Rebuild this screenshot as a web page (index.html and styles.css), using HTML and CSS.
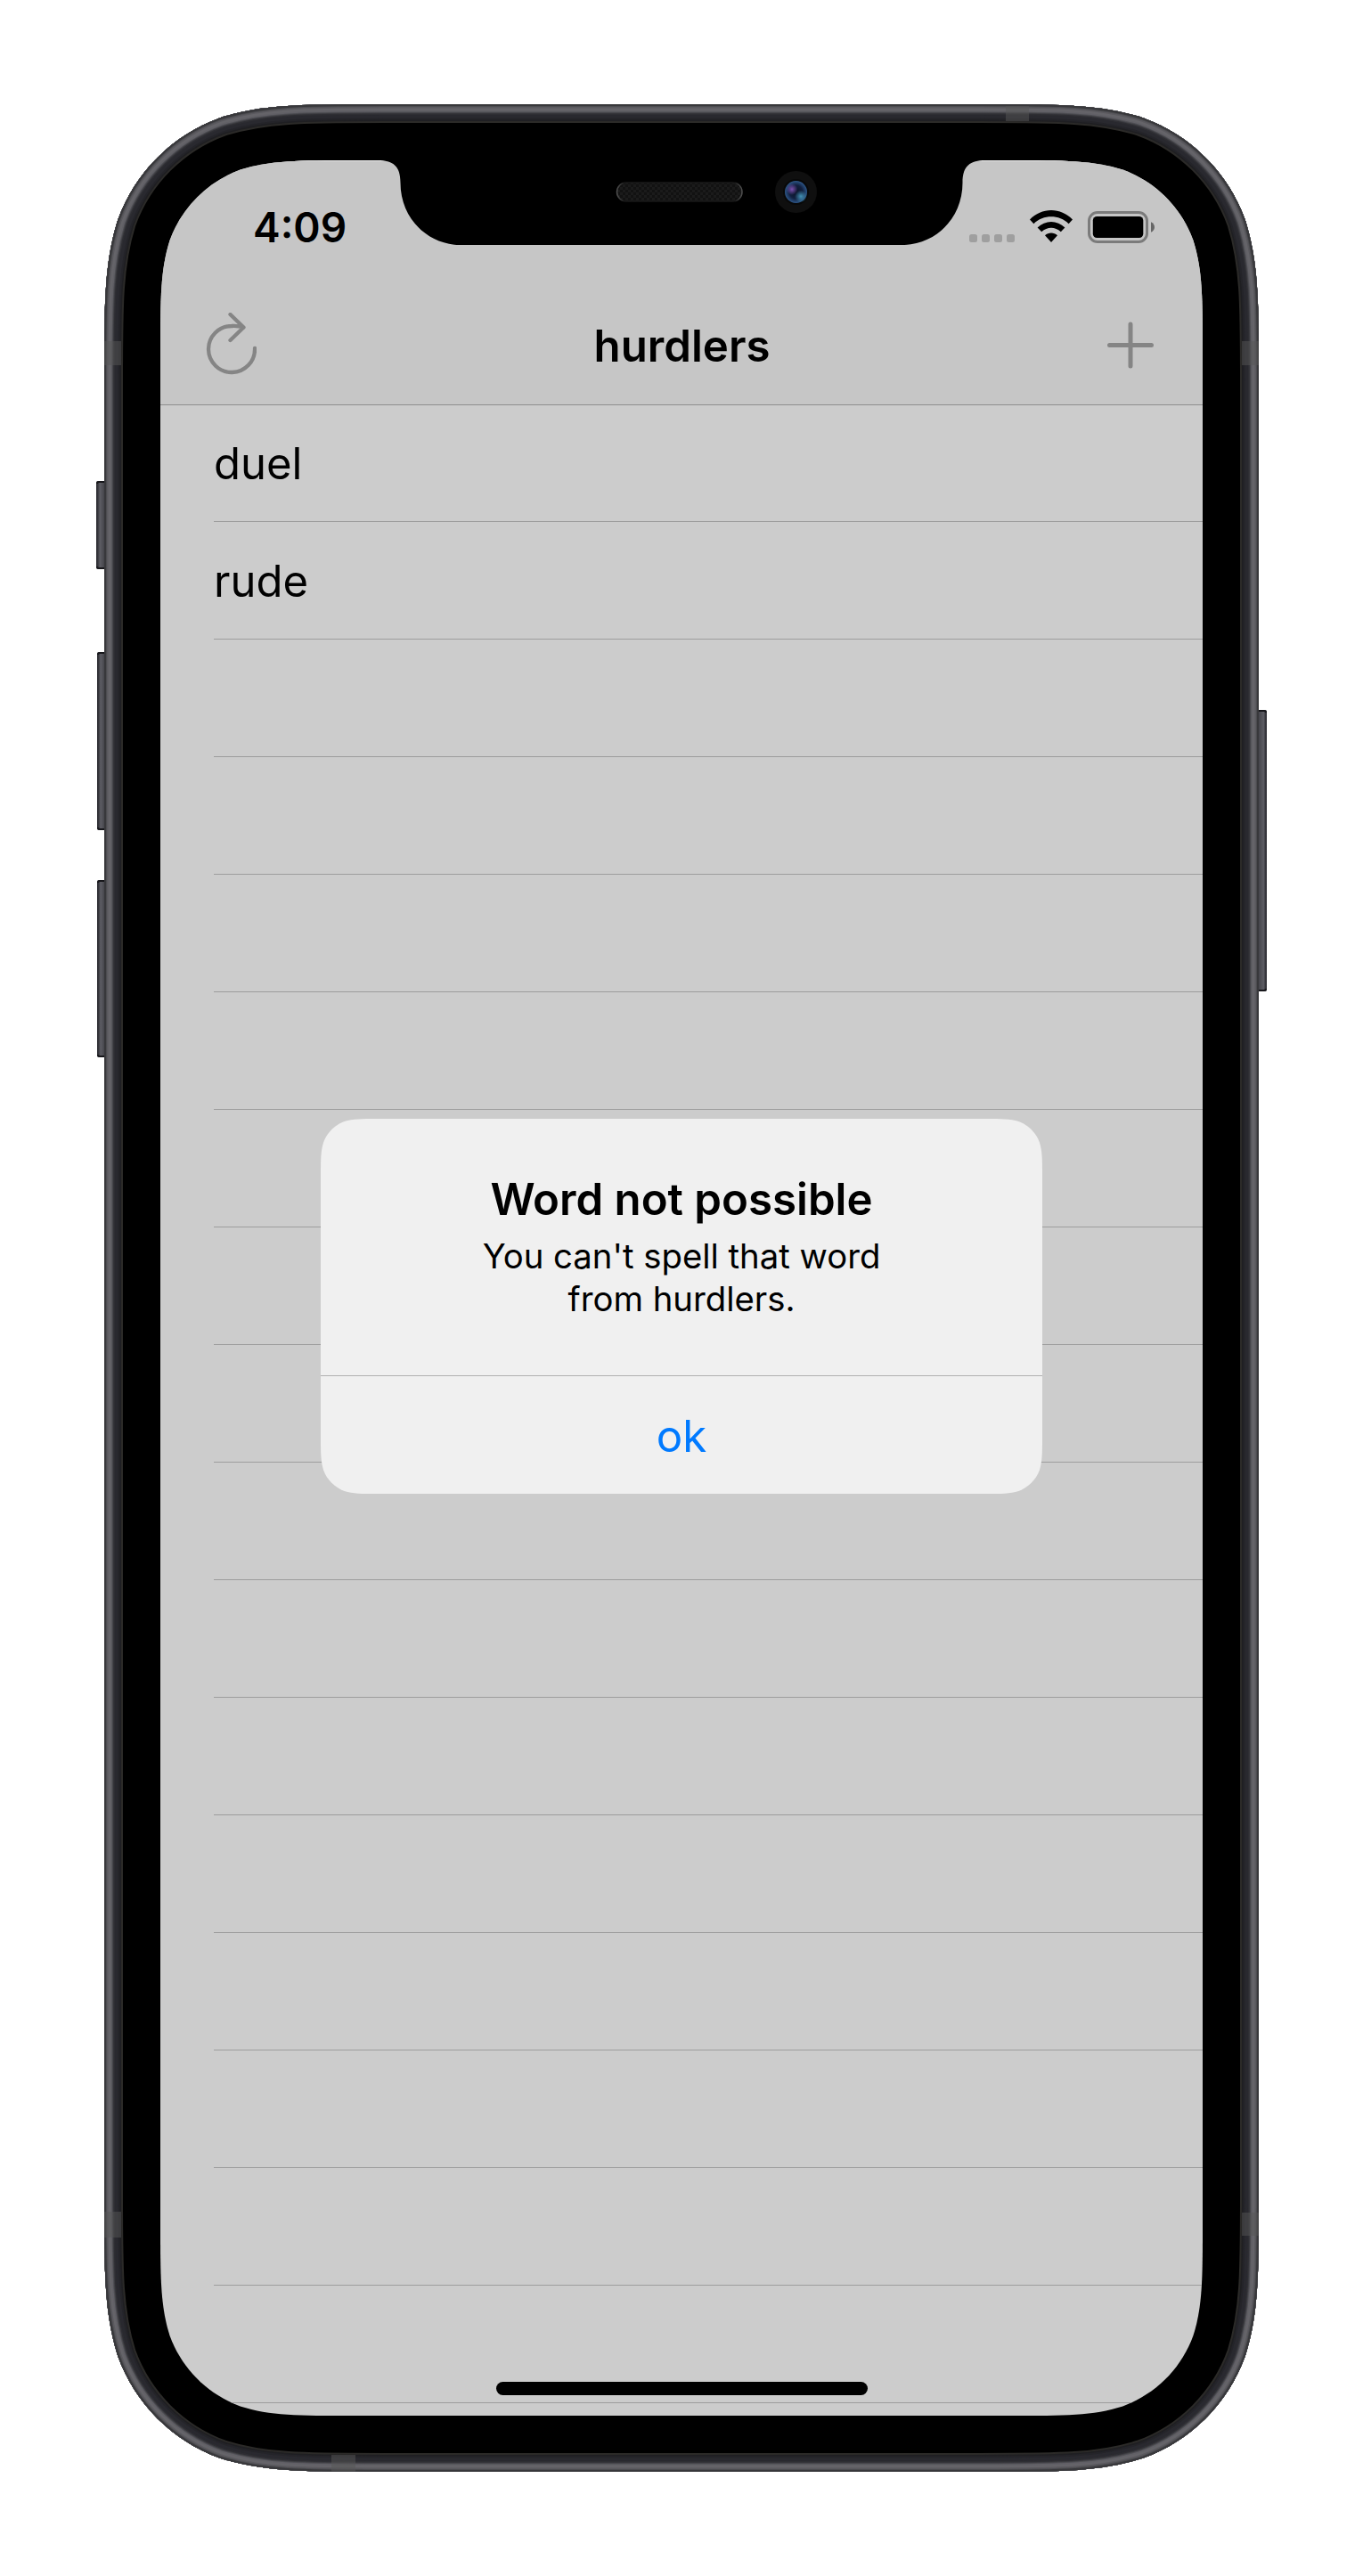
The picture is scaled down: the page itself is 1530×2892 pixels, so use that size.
FILE: index.html
```html
<!DOCTYPE html>
<html lang="en">
<head>
<meta charset="utf-8">
<title>hurdlers</title>
<link rel="stylesheet" href="styles.css">
</head>
<body>
<div class="phone">
  <svg class="shell" width="1314" height="2658" viewBox="-9 0 1314 2658" aria-hidden="true">
    <defs>
      <path id="body" d="M313.4 0H982.6C1072.9 0 1118 0 1166.5 15.4C1219.6 34.7 1261.3 76.4 1280.6 129.5C1296 178 1296 223.1 1296 313.4V2344.6C1296 2434.9 1296 2480 1280.6 2528.5C1261.3 2581.6 1219.6 2623.3 1166.5 2642.6C1118 2658 1072.9 2658 982.6 2658H313.4C223.1 2658 178 2658 129.5 2642.6C76.4 2623.3 34.7 2581.6 15.4 2528.5C0 2480 0 2434.9 0 2344.6V313.4C0 223.1 0 178 15.4 129.5C34.7 76.4 76.4 34.7 129.5 15.4C178 0 223.1 0 313.4 0Z"/>
      <clipPath id="body-clip"><use href="#body"/></clipPath>
      <linearGradient id="key-left"><stop offset="0" stop-color="#29292f"/><stop offset=".15" stop-color="#35353b"/><stop offset=".35" stop-color="#5d5d64"/><stop offset=".65" stop-color="#4b4b51"/><stop offset="1" stop-color="#38383d"/></linearGradient>
      <linearGradient id="key-right"><stop offset="0" stop-color="#38383d"/><stop offset=".35" stop-color="#4b4b51"/><stop offset=".7" stop-color="#5d5d64"/><stop offset=".88" stop-color="#35353b"/><stop offset="1" stop-color="#29292f"/></linearGradient>
    </defs>
    <!-- side buttons -->
    <g fill="url(#key-left)">
      <rect x="-9" y="423" width="12" height="99" rx="2"/>
      <rect x="-8" y="615" width="11" height="200" rx="2"/>
      <rect x="-8" y="871" width="11" height="199" rx="2"/>
    </g>
    <rect x="1293" y="680" width="12" height="316" rx="2" fill="url(#key-right)"/>
    <g fill="none" stroke="#17171b" stroke-width="2">
      <path d="M0 424H-6Q-8 424-8 426M0 521H-6Q-8 521-8 519M0 616H-5Q-7 616-7 618M0 814H-5Q-7 814-7 812M0 872H-5Q-7 872-7 874M0 1069H-5Q-7 1069-7 1067M1296 681H1302Q1304 681 1304 683M1296 995H1302Q1304 995 1304 993"/>
    </g>
    <!-- metal band, shaded from the edge inwards -->
    <g clip-path="url(#body-clip)" fill="none">
      <use href="#body" fill="#000"/>
      <use href="#body" stroke="#2b2a28" stroke-width="42"/>
      <use href="#body" stroke="#1f1f22" stroke-width="38"/>
      <use href="#body" stroke="#242429" stroke-width="35"/>
      <use href="#body" stroke="#29292f" stroke-width="31"/>
      <use href="#body" stroke="#2e2e33" stroke-width="24"/>
      <use href="#body" stroke="#3d3d42" stroke-width="21"/>
      <use href="#body" stroke="#4e4e53" stroke-width="19"/>
      <use href="#body" stroke="#616066" stroke-width="17"/>
      <use href="#body" stroke="#656469" stroke-width="14"/>
      <use href="#body" stroke="#5a595e" stroke-width="9"/>
      <use href="#body" stroke="#4c4c50" stroke-width="6"/>
      <use href="#body" stroke="#38383b" stroke-width="4"/>
      <g fill="#555" fill-opacity=".5">
        <rect x="0" y="266" width="19" height="27"/>
        <rect x="1277" y="266" width="19" height="27"/>
        <rect x="0" y="2366" width="19" height="29"/>
        <rect x="1277" y="2367" width="19" height="26"/>
        <rect x="1012" y="2" width="26" height="17"/>
        <rect x="255" y="2639" width="27" height="19"/>
      </g>
    </g>
  </svg>

  <main class="screen">
    <header class="header">
      <div class="status">
        <span class="time">4:09</span>
        <div class="indicators">
          <svg width="51" height="38" viewBox="0 0 51 38" fill="#9f9f9f"><rect y="27" width="9" height="9" rx="2.5"/><rect x="14" y="27" width="9" height="9" rx="2.5"/><rect x="28" y="27" width="9" height="9" rx="2.5"/><rect x="42" y="27" width="9" height="9" rx="2.5"/></svg>
          <svg width="48" height="38" viewBox="0 0 48 38"><path d="M0 10.6C13-3.5 35-3.5 48 10.6L43.6 15.2C33 4.6 15 4.6 4.4 15.2ZM8.6 19.6C17.3 10.8 30.7 10.8 39.4 19.6L34.8 24.2C28.5 18.1 19.5 18.1 13.2 24.2ZM17 28.2C21 24.6 27 24.6 31 28.2L24 36Z"/></svg>
          <svg width="75" height="38" viewBox="0 0 75 38"><rect x="1.5" y="2.5" width="65" height="33" rx="9.5" fill="none" stroke="#7b7b7b" stroke-width="3"/><rect x="5.8" y="7" width="56.5" height="24" rx="4.5"/><path d="M71 13.3C76.3 15.5 76.3 22.5 71 24.7Z" fill="#666"/></svg>
        </div>
      </div>
      <nav class="navbar">
        <svg class="reload" width="58" height="72" viewBox="-1 0 58 72"><path d="M55 40A26 26 0 1 1 29 15Q36 14.5 42.5 16.5M27.5 2L42.5 16.5L27.5 31"/></svg>
        <h1>hurdlers</h1>
        <svg width="52" height="54" viewBox="0 0 52 54"><path d="M26 3V50M2.5 26.5H49.5"/></svg>
      </nav>
    </header>
    <ul class="words">
      <li>duel</li><li>rude</li><li></li><li></li><li></li><li></li><li></li><li></li><li></li>
      <li></li><li></li><li></li><li></li><li></li><li></li><li></li><li></li>
    </ul>
    <section class="alert" role="alertdialog">
      <div class="message">
        <h2>Word not possible</h2>
        <p>You can't spell that word<br>from hurdlers.</p>
      </div>
      <button class="action">ok</button>
    </section>
    <div class="home"></div>
  </main>

  <svg class="notch" width="690" height="100" viewBox="420 179 690 100" aria-hidden="true">
    <defs>
      <pattern id="mesh" width="6" height="6" patternUnits="userSpaceOnUse"><rect width="6" height="6" fill="#121212"/><rect width="3" height="3" fill="#1b1b1b"/><rect x="3" y="3" width="3" height="3" fill="#1b1b1b"/></pattern>
      <linearGradient id="rim"><stop offset="0" stop-color="#505050"/><stop offset=".06" stop-color="#181818"/><stop offset=".94" stop-color="#181818"/><stop offset="1" stop-color="#505050"/></linearGradient>
      <radialGradient id="violet"><stop offset="0" stop-color="#7b50ae"/><stop offset="1" stop-color="#7b50ae" stop-opacity="0"/></radialGradient>
      <radialGradient id="cyan"><stop offset="0" stop-color="#4291b4"/><stop offset="1" stop-color="#4291b4" stop-opacity="0"/></radialGradient>
      <radialGradient id="lens"><stop offset="0" stop-color="#0a1227"/><stop offset=".6" stop-color="#12203f"/><stop offset="1" stop-color="#2d5688"/></radialGradient>
    </defs>
    <path d="M424 179V180C441 180 449.5 186 449.5 205C449.5 246 481 275 517 275H1013C1049 275 1080.5 246 1080.5 205C1080.5 186 1089 180 1106 180V179Z"/>
    <rect x="692.5" y="205" width="140.5" height="21" rx="10.5" fill="url(#mesh)" stroke="url(#rim)" stroke-width="1.5"/>
    <circle cx="893.5" cy="215.5" r="23.5" fill="#0f0f0f"/>
    <circle cx="893.5" cy="215.5" r="14.5" fill="#080808"/>
    <circle cx="893.5" cy="215.5" r="12.5" fill="url(#lens)"/>
    <circle cx="889" cy="212.5" r="6.5" fill="url(#violet)"/>
    <circle cx="899" cy="220.5" r="7" fill="url(#cyan)"/>
  </svg>
</div>
</body>
</html>
```
FILE: styles.css
```css
* { box-sizing: border-box; }
body { margin: 0; background: #fff; font-family: Inter, "Liberation Sans", sans-serif; color: #000; }
h1, h2, p, ul { margin: 0; padding: 0; font-weight: 400; }
svg { display: block; flex: none; }

.phone { position: relative; width: 1296px; height: 2658px; margin: 117px; padding: 63px; }
.shell { position: absolute; left: -9px; top: 0; }

.screen {
  position: relative;
  display: flex;
  flex-direction: column;
  width: 1170px;
  height: 2532px;
  background: #ccc;
  overflow: hidden;
  clip-path: path("M217.1 0H952.9C1015.4 0 1046.7 0 1080.3 10.6C1117.1 24 1146 52.9 1159.4 89.7C1170 123.3 1170 154.6 1170 217.1V2314.9C1170 2377.4 1170 2408.7 1159.4 2442.3C1146 2479.1 1117.1 2508 1080.3 2521.4C1046.7 2532 1015.4 2532 952.9 2532H217.1C154.6 2532 123.3 2532 89.7 2521.4C52.9 2508 24 2479.1 10.6 2442.3C0 2408.7 0 2377.4 0 2314.9V217.1C0 154.6 0 123.3 10.6 89.7C24 52.9 52.9 24 89.7 10.6C123.3 0 154.6 0 217.1 0Z");
}

.header { flex: none; height: 275px; background: #c6c6c6; border-bottom: 1px solid #8e8e8e; box-shadow: inset 0 1px #eee; }
.status { display: flex; align-items: center; justify-content: space-between; height: 142px; padding: 8px 54px 0 104px; }
.time { font-size: 46px; font-weight: 600; line-height: 60px; }
.indicators { display: flex; align-items: center; gap: 17px; }
.navbar { display: flex; align-items: center; justify-content: space-between; height: 132px; padding: 0 55px 0 50px; }
.navbar h1 { font-size: 49.2px; font-weight: 600; line-height: 132px; }
.navbar svg { fill: none; stroke: #858585; stroke-width: 5; stroke-linecap: round; stroke-linejoin: round; }
.navbar .reload { stroke-width: 4.3; margin-bottom: 2px; }

.words { list-style: none; padding-left: 60px; margin-top: -1px; }
.words li { height: 132px; padding-top: 3px; border-bottom: 1px solid #9d9d9d; font-size: 49px; line-height: 128px; }

.alert {
  position: absolute;
  left: 180px;
  top: 1076px;
  width: 810px;
  height: 421px;
  background: #f0f0f0;
  text-align: center;
  clip-path: path("M64.2 0H745.8C764.3 0 773.5 0 783.5 3.1C794.3 7.1 802.9 15.7 806.9 26.5C810 36.5 810 45.7 810 64.2V356.8C810 375.3 810 384.5 806.9 394.5C802.9 405.3 794.3 413.9 783.5 417.9C773.5 421 764.3 421 745.8 421H64.2C45.7 421 36.5 421 26.5 417.9C15.7 413.9 7.1 405.3 3.1 394.5C0 384.5 0 375.3 0 356.8V64.2C0 45.7 0 36.5 3.1 26.5C7.1 15.7 15.7 7.1 26.5 3.1C36.5 0 45.7 0 64.2 0Z");
}
.message { height: 288px; padding-top: 60px; }
.message h2 { font-size: 49.2px; font-weight: 600; line-height: 60px; }
.message p { margin-top: 10px; font-size: 38.3px; line-height: 48px; }
.action { display: block; width: 100%; height: 133px; padding: 2px 0 0; border: 0; border-top: 1px solid #b0b0b0; background: none; color: #007aff; font: 400 49.2px/130px Inter, "Liberation Sans", sans-serif; }

.home { position: absolute; left: 377px; bottom: 23px; width: 417px; height: 15px; border-radius: 8px; background: #000; }
.notch { position: absolute; left: 303px; top: 62px; }
```
